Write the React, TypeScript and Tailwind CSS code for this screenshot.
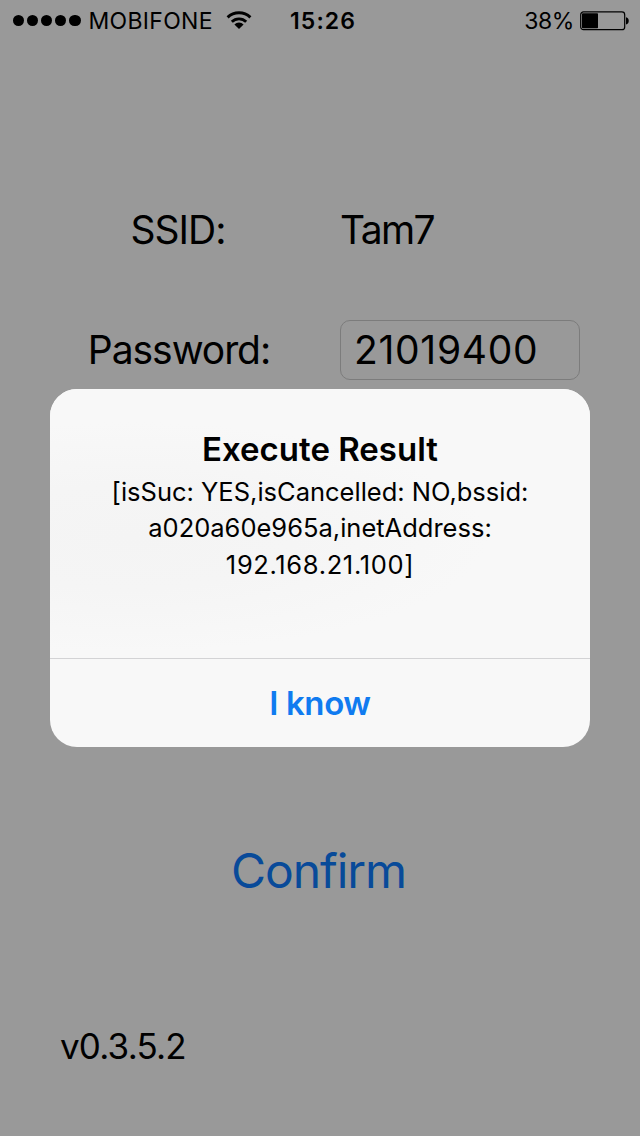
function SignalDots() {
  return (
    <div className="flex w-[68px] justify-between">
      {[0, 1, 2, 3, 4].map((dot) => (
        <span key={dot} className="size-[11.5px] rounded-full bg-black" />
      ))}
    </div>
  );
}

function WifiIcon() {
  return (
    <svg className="h-[19px] w-[26px]" viewBox="0 0 26 19" fill="none" stroke="black">
      <path d="M1.6 6.4 A16.4 16.4 0 0 1 24.4 6.4" strokeWidth="2.9" />
      <path d="M5.8 10.8 A10.2 10.2 0 0 1 20.2 10.8" strokeWidth="2.8" />
      <path d="M13 18 L8.4 13.5 A6.5 6.5 0 0 1 17.6 13.5 Z" fill="black" stroke="none" />
    </svg>
  );
}

function BatteryIcon() {
  return (
    <svg className="h-[20px] w-[50px]" viewBox="0 0 50 20">
      <rect x="0.7" y="0.9" width="44" height="17.8" rx="2.8" fill="none" stroke="black" strokeWidth="1.2" />
      <rect x="2" y="2.3" width="16" height="15" rx="0.8" fill="black" />
      <path d="M46 6.2 C49.7 6.8 49.7 12.8 46 13.4 Z" fill="black" />
    </svg>
  );
}

function StatusBar() {
  return (
    <header className="flex h-[41px] items-center text-[23px] leading-[40px]">
      <div className="flex w-[290px] items-center pl-[12.5px]">
        <SignalDots />
        <span className="ml-[8px] w-[137px] pt-[1px] tracking-[0.3px]">MOBIFONE</span>
        <WifiIcon />
      </div>
      <span className="pt-[1px] font-semibold tracking-[1.1px]">15:26</span>
      <div className="ml-auto flex items-center gap-[6px] pr-[10px]">
        <span className="pt-[1px] tracking-[-0.4px]">38%</span>
        <BatteryIcon />
      </div>
    </header>
  );
}

function AlertDialog() {
  return (
    <div
      role="alertdialog"
      className="flex h-[358px] w-[540px] flex-col overflow-hidden rounded-[27px] bg-[#f8f8f8] text-center"
    >
      <div className="flex h-[269px] flex-col items-center bg-[radial-gradient(ellipse_at_15%_55%,#f4f4f4_0%,#f5f5f5_25%,#f8f8f8_55%)] pt-[39px]">
        <h1 className="text-[33px] leading-[42px] font-semibold">Execute Result</h1>
        <p className="pt-[4px] text-[25.5px] leading-[36.3px] whitespace-nowrap">
          [isSuc: YES,isCancelled: NO,bssid:
          <br />
          a020a60e965a,inetAddress:
          <br />
          <span className="tracking-[0.65px]">192.168.21.100]</span>
        </p>
      </div>
      <button className="h-[89px] border-t border-[#d3d3d5] pt-[2px] text-[33px] font-semibold tracking-[-0.4px] text-[#107bf0]">
        I know
      </button>
    </div>
  );
}

export default function App() {
  return (
    <div className="relative h-[1136px] w-[640px] overflow-hidden bg-[#999999] font-['Inter',sans-serif] text-black">
      <StatusBar />
      <main className="flex flex-col">
        <div className="mt-[159px] grid h-[60px] grid-cols-[160px_240px] items-center gap-x-[80px] pl-[100px] text-[39px] leading-[60px]">
          <span className="-ml-5 w-[196px] text-center tracking-[-1px]">SSID:</span>
          <span className="tracking-[-1.6px]">Tam7</span>
        </div>
        <div className="mt-[60px] grid h-[60px] grid-cols-[198px_240px] items-center gap-x-[62px] pl-[80px] text-[39px] leading-[58px]">
          <span className="text-center tracking-[-1.05px] whitespace-nowrap">Password:</span>
          <div className="h-[60px] rounded-[10px] border border-[#7c7c7c] pl-[13px] tracking-[0.7px]">21019400</div>
        </div>
        <button className="mt-[461px] h-[60px] pr-[3px] text-[48px] leading-[60px] tracking-[-1.1px] text-[#084a99]">
          Confirm
        </button>
        <span className="mt-[115px] h-[60px] pl-[60px] text-[35px] leading-[60px] tracking-[-0.8px]">v0.3.5.2</span>
      </main>
      <div className="absolute inset-0 flex justify-center pt-[389px]">
        <AlertDialog />
      </div>
    </div>
  );
}
